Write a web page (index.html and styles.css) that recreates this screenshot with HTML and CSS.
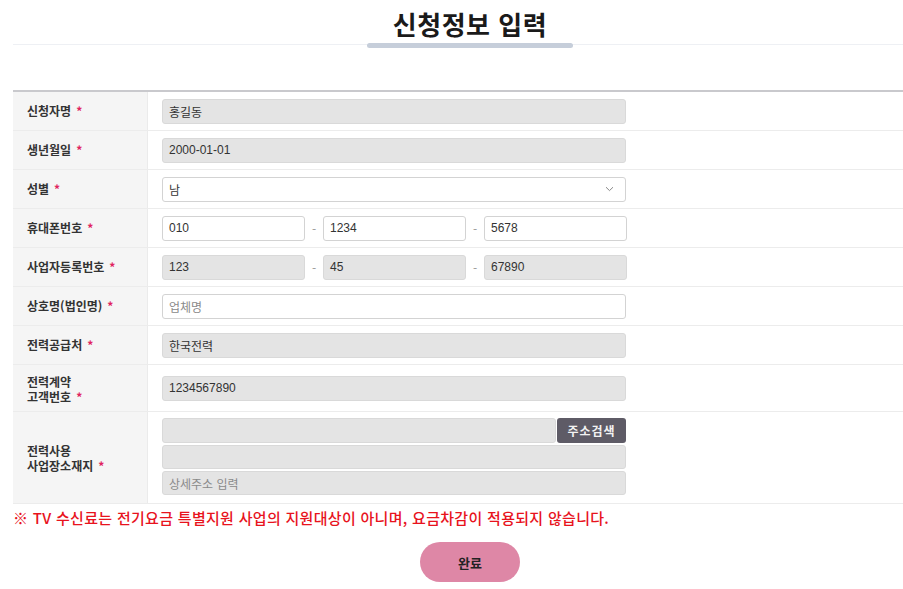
FILE: index.html
```html
<!DOCTYPE html>
<html lang="ko">
<head>
<meta charset="utf-8">
<link rel="stylesheet" href="styles.css">
</head>
<body>
<div class="page">
  <div class="head">
    <h1 class="title">신청정보 입력</h1>
    <div class="head-line"><span class="head-bar"></span></div>
  </div>

  <div class="form">
    <div class="row">
      <div class="lbl">신청자명<i>*</i></div>
      <div class="val"><div class="inp dis">홍길동</div></div>
    </div>
    <div class="row">
      <div class="lbl">생년월일<i>*</i></div>
      <div class="val"><div class="inp dis">2000-01-01</div></div>
    </div>
    <div class="row">
      <div class="lbl">성별<i>*</i></div>
      <div class="val"><div class="inp sel">남<svg class="chev" width="9" height="6" viewBox="0 0 9 6"><path d="M1 1.2l3.5 3.4L8 1.2" fill="none" stroke="#888" stroke-width="1"/></svg></div></div>
    </div>
    <div class="row">
      <div class="lbl">휴대폰번호<i>*</i></div>
      <div class="val trio">
        <div class="inp">010</div><span class="dash">-</span>
        <div class="inp">1234</div><span class="dash">-</span>
        <div class="inp">5678</div>
      </div>
    </div>
    <div class="row">
      <div class="lbl">사업자등록번호<i>*</i></div>
      <div class="val trio">
        <div class="inp dis">123</div><span class="dash">-</span>
        <div class="inp dis">45</div><span class="dash">-</span>
        <div class="inp dis">67890</div>
      </div>
    </div>
    <div class="row">
      <div class="lbl">상호명(법인명)<i>*</i></div>
      <div class="val"><div class="inp ph">업체명</div></div>
    </div>
    <div class="row">
      <div class="lbl">전력공급처<i>*</i></div>
      <div class="val"><div class="inp dis">한국전력</div></div>
    </div>
    <div class="row tall">
      <div class="lbl"><span class="ln">전력계약</span><span class="ln">고객번호<i>*</i></span></div>
      <div class="val"><div class="inp dis">1234567890</div></div>
    </div>
    <div class="row addr">
      <div class="lbl"><span class="ln">전력사용</span><span class="ln">사업장소재지<i>*</i></span></div>
      <div class="val stack">
        <div class="addr-top"><div class="inp dis"></div><button class="search">주소검색</button></div>
        <div class="inp dis"></div>
        <div class="inp dis ph">상세주소 입력</div>
      </div>
    </div>
  </div>

  <p class="notice">※ TV 수신료는 전기요금 특별지원 사업의 지원대상이 아니며, 요금차감이 적용되지 않습니다.</p>

  <div class="actions"><button class="done">완료</button></div>
</div>
</body>
</html>
```

FILE: styles.css
```css
* { box-sizing: border-box; }
html, body { margin: 0; padding: 0; background: #fff; }
body {
  font-family: "Noto Sans CJK KR", "Noto Sans", "Liberation Sans", sans-serif;
  color: #333;
}
.page { padding-left: 13px; width: 903px; }

.head { padding-top: 6px; }
.title {
  margin: 0 0 0 24px;
  text-align: center;
  font-size: 26px;
  line-height: 36px;
  font-weight: 700;
  color: #1a1a1a;
  letter-spacing: 0.5px;
}
.head-line {
  height: 1px;
  margin-top: 2px;
  background: #eef0f4;
  display: flex;
  justify-content: center;
  padding-left: 24px;
}
.head-bar {
  display: block;
  width: 206px;
  height: 5px;
  border-radius: 3px;
  background: #c6ceda;
  margin-top: -1px;
}

.form {
  margin-top: 45px;
  border-top: 2px solid #c9c9cd;
}
.row {
  display: grid;
  grid-template-columns: 135px 1fr;
  height: 39px;
  border-bottom: 1px solid #ececec;
}
.row.tall { height: 47px; }
.row.addr { height: 92px; }
.lbl {
  background: #f5f5f5;
  border-right: 1px solid #ebebeb;
  display: flex;
  align-items: center;
  padding-left: 14px;
  font-size: 12px;
  font-weight: 700;
  color: #333;
  line-height: 18px;
}
.row.tall .lbl, .row.addr .lbl {
  flex-direction: column;
  align-items: flex-start;
  justify-content: flex-start;
  line-height: 13px;
}
.ln { display: block; height: 13px; line-height: 13px; }
.ln + .ln { margin-top: 2px; }
.row.tall .lbl { padding-top: 10px; }
.row.addr .lbl { padding-top: 32px; }
.lbl i {
  font-style: normal;
  color: #e0245e;
  margin-left: 5px;
}
.val {
  display: flex;
  align-items: center;
  padding-left: 14px;
}
.inp {
  width: 464px;
  height: 25px;
  border: 1px solid #d3d3d3;
  border-radius: 3px;
  background: #fff;
  display: flex;
  align-items: center;
  padding-left: 6px;
  font-size: 12px;
  color: #333;
  font-family: "Liberation Sans", "Noto Sans CJK KR", sans-serif;
}
.inp.dis { background: #e4e4e4; border-color: #d9d9d9; }
.inp.ph { color: #8a8a8a; }
.inp.sel { justify-content: space-between; padding-right: 11px; }
.chev { display: block; }

.trio .inp { width: 143px; }
.dash {
  width: 18px;
  text-align: center;
  font-size: 12px;
  color: #999;
}

.stack {
  flex-direction: column;
  align-items: flex-start;
  justify-content: flex-start;
  padding-top: 6px;
  gap: 2px;
}
.stack > .inp { width: 464px; height: 24px; }
.addr-top { display: flex; width: 464px; height: 25px; gap: 1px; }
.addr-top .inp { width: 394px; height: 25px; }
.search {
  width: 69px;
  height: 25px;
  border: 0;
  border-radius: 3px;
  background: #5e5b66;
  color: #f2f2f2;
  font-family: "Noto Sans CJK KR", sans-serif;
  font-size: 12px;
  font-weight: 700;
  padding: 0;
  letter-spacing: 1px;
}

.notice {
  margin: 4px 0 0 0;
  font-size: 15px;
  line-height: 20px;
  color: #e8131d;
  font-weight: 500;
  letter-spacing: 0.3px;
}

.actions {
  display: flex;
  justify-content: center;
  padding-left: 24px;
  margin-top: 14px;
}
.done {
  width: 100px;
  height: 40px;
  border: 0;
  border-radius: 20px;
  background: #de87a6;
  color: #222;
  font-family: "Noto Sans CJK KR", sans-serif;
  font-size: 13px;
  font-weight: 700;
  padding: 0;
}
```
